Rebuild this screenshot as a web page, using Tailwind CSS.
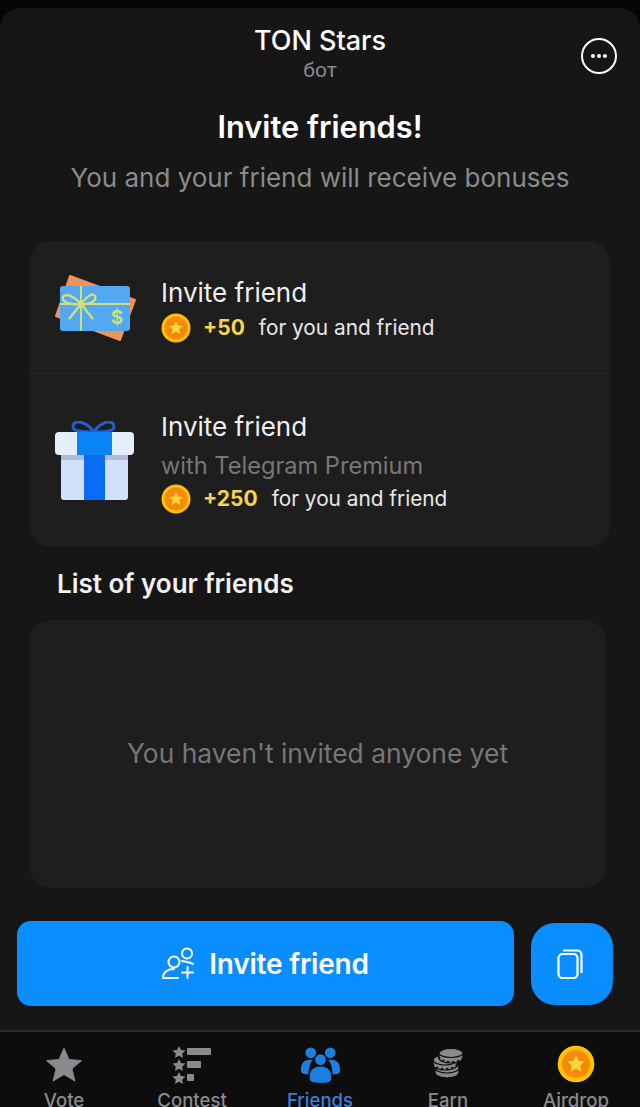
<!DOCTYPE html>
<html>
<head>
<meta charset="utf-8">
<script src="https://cdn.jsdelivr.net/npm/@tailwindcss/browser@4"></script>
</head>
<body class="bg-black">
<div class="w-[640px] h-[1107px] overflow-hidden flex flex-col bg-[#050505] font-['Inter','Noto_Sans',sans-serif] pt-2">
  <div class="flex-1 flex flex-col bg-[#161616] rounded-t-[20px] min-h-0">
    <header class="relative h-[76px] flex flex-col items-center pt-[16px]">
      <div class="text-[27px] leading-[34px] font-medium text-white">TON Stars</div>
      <div class="text-[21px] leading-[22px] mt-[1px] text-[#8a8a8a] font-['Roboto',sans-serif]">бот</div>
      <div class="absolute right-[23px] top-[30px] w-[36px] h-[36px] rounded-full border-2 border-white flex items-center justify-center gap-[2px]">
        <span class="w-[4px] h-[4px] rounded-full bg-white"></span><span class="w-[4px] h-[4px] rounded-full bg-white"></span><span class="w-[4px] h-[4px] rounded-full bg-white"></span>
      </div>
    </header>
    <h1 class="mt-[20px] text-center text-[30.8px] leading-[46px] font-semibold text-white">Invite friends!</h1>
    <p class="mt-[8px] text-center text-[26px] leading-[40px] text-[#8b8b8b]">You and your friend will receive bonuses</p>

    <section class="mt-[43px] mx-[29px] w-[581px] h-[306px] rounded-[22px] bg-[#1e1e1e] flex flex-col">
      <div class="h-[133px] flex border-b border-[#262626]">
        <div class="w-[132px] shrink-0 pl-[26px] pt-[34px]">
          <svg width="82" height="67" viewBox="0 0 82 67">
            <path d="M15 1 L80 25 L65 65 L1 41 Z" fill="#f0935a" stroke="#f0935a" stroke-width="2" stroke-linejoin="round"/>
            <rect x="5" y="11" width="70" height="45" rx="3" fill="#54a8f2"/>
            <path d="M26 11 V56 M5 29 H75" stroke="#cfe07a" stroke-width="2" fill="none"/>
            <path d="M26 29 C18 20 10 18 8 22 C6 28 18 30 26 29 C34 30 42 26 40 21 C38 17 32 21 26 29 L14 44 M26 29 L38 44" stroke="#cfe07a" stroke-width="2.4" fill="none"/>
            <text x="62" y="49" font-size="19" font-weight="700" fill="#cfe07a" text-anchor="middle" font-family="Inter">$</text>
          </svg>
        </div>
        <div class="pt-[34px]">
          <div class="text-[26px] leading-[36px] text-[#f0f0f0]">Invite friend</div>
          <div class="flex items-center h-[34px]">
            <svg width="30" height="30" viewBox="0 0 30 30" class="mr-[12px]"><circle cx="15" cy="15" r="14.5" fill="#ffc107"/><circle cx="15" cy="15" r="11.5" fill="#f58a07"/><path d="M15 8 l2.100 4.400 4.800.6 -3.500 3.300.9 4.800 -4.300-2.400 -4.300 2.400.9-4.800 -3.500-3.300 4.800-.6z" fill="#ffd23f"/></svg>
            <span class="text-[21px] font-bold text-[#f8d548] mr-[14px]">+50</span>
            <span class="text-[20.8px] text-[#e8e8e8]">for you and friend</span>
          </div>
        </div>
      </div>
      <div class="flex-1 flex">
        <div class="w-[132px] shrink-0 pl-[26px] pt-[47px]">
          <svg width="80" height="80" viewBox="0 0 80 80">
            <path d="M39 11 C31 0 19 -2 18 5 C17 11 30 11 39 11 C48 11 60 11 59 5 C58 -2 46 0 39 11" stroke="#1f5fcf" stroke-width="3" fill="none"/>
            <rect x="6" y="24" width="67" height="55" rx="3" fill="#d2e0f7"/>
            <rect x="0" y="11" width="79" height="23" rx="4" fill="#e6eefb"/>
            <rect x="6" y="34" width="67" height="5" fill="#aebbd2"/>
            <rect x="22" y="11" width="35" height="23" fill="#0a84f5"/>
            <rect x="29" y="34" width="21" height="45" fill="#0a6cf5"/>
          </svg>
        </div>
        <div class="pt-[35px]">
          <div class="text-[26px] leading-[36px] text-[#f0f0f0]">Invite friend</div>
          <div class="text-[23.6px] leading-[38px] mt-[2px] text-[#777777]">with Telegram Premium</div>
          <div class="flex items-center h-[32px] -mt-[2px]">
            <svg width="30" height="30" viewBox="0 0 30 30" class="mr-[12px]"><circle cx="15" cy="15" r="14.5" fill="#ffc107"/><circle cx="15" cy="15" r="11.5" fill="#f58a07"/><path d="M15 8 l2.100 4.400 4.800.6 -3.500 3.300.9 4.800 -4.300-2.400 -4.300 2.400.9-4.800 -3.500-3.300 4.800-.6z" fill="#ffd23f"/></svg>
            <span class="text-[21px] font-bold text-[#f8d548] mr-[14px]">+250</span>
            <span class="text-[20.8px] text-[#e8e8e8]">for you and friend</span>
          </div>
        </div>
      </div>
    </section>

    <h2 class="mt-[20px] ml-[57px] text-[26px] leading-[34px] font-semibold text-[#f2f2f2]">List of your friends</h2>

    <section class="mt-[19px] ml-[29px] w-[577px] h-[268px] rounded-[22px] bg-[#1e1e1e] flex items-center justify-center">
      <span class="text-[26.4px] text-[#777777]">You haven't invited anyone yet</span>
    </section>

    <div class="mt-[33px] ml-[17px] flex items-center gap-[17px]">
      <button class="w-[497px] h-[85px] rounded-[14px] bg-[#0a8dff] flex items-center justify-center gap-[15px]">
        <svg width="32" height="33" viewBox="0 0 32 33" fill="none" stroke="white" stroke-width="2" stroke-linecap="round"><circle cx="12" cy="15" r="5.500"/><circle cx="25" cy="6.500" r="5"/><path d="M1 31 C1 25 6 22 12 22 M1 31 H16"/><path d="M20 14 C24 15 28 15 31 17"/><path d="M25.500 20 V31 M20 25.500 H31"/></svg>
        <span class="text-[28px] font-semibold text-white tracking-[-0.2px]">Invite friend</span>
      </button>
      <button class="w-[82px] h-[82px] rounded-[24px] bg-[#0a8dff] flex items-center justify-center pr-[4px]">
        <svg width="26" height="30" viewBox="0 0 26 30" fill="none" stroke="white" stroke-width="2.200"><rect x="1.500" y="5" width="19" height="24" rx="4"/><path d="M6 1.500 H20 Q24.500 1.500 24.500 6 V24"/></svg>
      </button>
    </div>

    <nav class="mt-[24px] flex-1 min-h-0 border-t-2 border-[#2a2a2a] bg-[#0d0d0e] grid grid-cols-5">
      <div class="flex flex-col items-center pt-[15px]">
        <svg class="h-[36px]" width="36" height="36" viewBox="0 0 38 38"><path d="M19 1 l5.200 12.300 13.300 1 -10.100 8.700 3.100 13 -11.500-7 -11.500 7 3.100-13 -10.100-8.700 13.300-1z" fill="#8a8a8e" stroke="#8a8a8e" stroke-linejoin="round" stroke-width="1"/></svg>
        <span class="text-[18.6px] leading-[22px] font-medium text-[#8a8a8e] mt-[6px]">Vote</span>
      </div>
      <div class="flex flex-col items-center pt-[14px]">
        <svg class="h-[38px]" width="40" height="38" viewBox="0 0 40 38" fill="#8a8a8e"><path d="M7 0 l2 4 4.500.6 -3.300 3.100.8 4.300 -4-2.200 -4 2.200.8-4.300 -3.300-3.100 4.500-.6z"/><path d="M7 13 l2 4 4.500.6 -3.300 3.100.8 4.300 -4-2.200 -4 2.200.8-4.300 -3.300-3.100 4.500-.6z"/><path d="M7 26 l2 4 4.500.6 -3.300 3.100.8 4.300 -4-2.200 -4 2.200.8-4.300 -3.300-3.100 4.500-.6z"/><rect x="15" y="2" width="24" height="7" rx="1"/><rect x="15" y="15" width="14" height="7" rx="1"/><rect x="15" y="28" width="7" height="7" rx="1"/></svg>
        <span class="text-[18.6px] leading-[22px] font-medium text-[#8a8a8e] mt-[5px]">Contest</span>
      </div>
      <div class="flex flex-col items-center pt-[15px]">
        <svg class="h-[36px]" width="41" height="36" viewBox="0 0 42 37" fill="#1a7fe0"><circle cx="11" cy="6" r="5.500"/><circle cx="31" cy="6" r="5.500"/><path d="M1 26 C0 17 4 13 9 13 L13 13 C10 17 9 21 8.500 28 C5 28 2 28 1 26Z"/><path d="M41 26 C42 17 38 13 33 13 L29 13 C32 17 33 21 33.500 28 C37 28 40 28 41 26Z"/><circle cx="21" cy="13" r="5.500"/><path d="M10 33 C9 24 14 20 21 20 C28 20 33 24 32 33 C32 36 28 37 21 37 C14 37 10 36 10 33Z"/></svg>
        <span class="text-[18.6px] leading-[22px] font-medium text-[#3f7fd8] mt-[6px]">Friends</span>
      </div>
      <div class="flex flex-col items-center pt-[16px]">
        <svg class="h-[32px]" width="32" height="32" viewBox="0 0 32 32" fill="#8a8a8e" stroke="#0d0d0e" stroke-width="1.200">
          <path d="M3 20 V25 A12 5 0 0 0 27 25 V20 Z"/><path d="M3 25 A12 5 0 0 0 27 25" fill="none" stroke-width="2" stroke-dasharray="2 3"/><ellipse cx="15" cy="20" rx="12" ry="5"/>
          <path d="M1 12 V17 A12 5 0 0 0 25 17 V12 Z"/><path d="M1 16 A12 5 0 0 0 25 16" fill="none" stroke-width="2" stroke-dasharray="2 3"/><ellipse cx="13" cy="12" rx="12" ry="5"/>
          <path d="M7 5 V10 A12 5 0 0 0 31 10 V5 Z"/><path d="M7 9 A12 5 0 0 0 31 9" fill="none" stroke-width="2" stroke-dasharray="2 3"/><ellipse cx="19" cy="5" rx="12" ry="4.500"/>
        </svg>
        <span class="text-[18.6px] leading-[22px] font-medium text-[#8a8a8e] mt-[9px]">Earn</span>
      </div>
      <div class="flex flex-col items-center pt-[13px]">
        <svg class="h-[38px]" width="38" height="38" viewBox="0 0 30 30"><circle cx="15" cy="15" r="14.500" fill="#ffc107"/><circle cx="15" cy="15" r="11" fill="#f58a07"/><path d="M15 8 l2.100 4.400 4.800.6 -3.500 3.300.9 4.800 -4.300-2.400 -4.300 2.400.9-4.800 -3.500-3.300 4.800-.6z" fill="#ffd23f"/></svg>
        <span class="text-[18.6px] leading-[22px] font-medium text-[#8a8a8e] mt-[6px]">Airdrop</span>
      </div>
    </nav>
  </div>
</div>
</body>
</html>
